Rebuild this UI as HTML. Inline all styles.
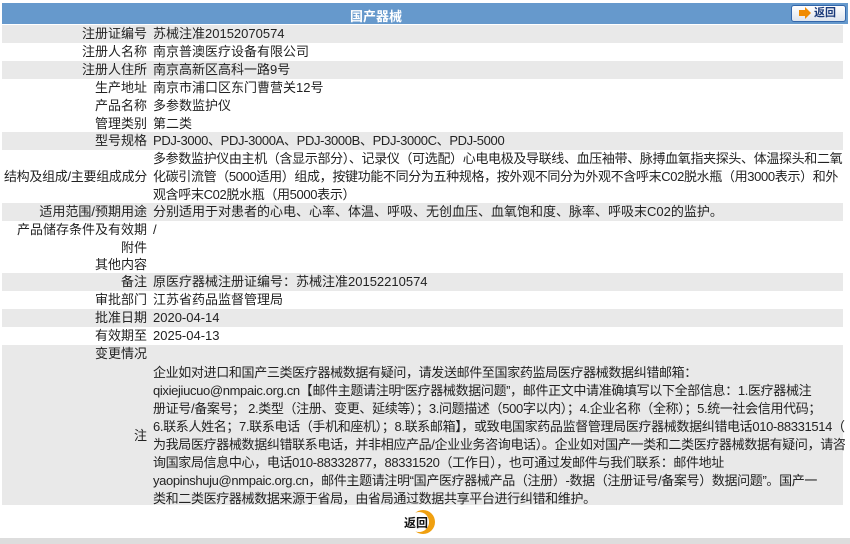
<!DOCTYPE html>
<html><head><meta charset="utf-8"><style>
*{margin:0;padding:0;box-sizing:border-box}
body{width:850px;height:544px;background:#fff;font-family:"Liberation Sans","Noto Sans CJK SC",sans-serif;font-size:13px;color:#222;position:relative;overflow:hidden}
.hd{position:absolute;left:2px;top:3px;width:846px;height:21px;background:#6699cc}
.hd .t{position:absolute;left:348px;top:3px;color:#fff;font-weight:bold;font-size:13px}
.btn{position:absolute;left:789px;top:2px;width:55px;height:17px;border:1px solid #3366aa;border-radius:3px;background:linear-gradient(#fff,#dde4ee);font-size:11px;font-weight:bold;color:#1a3a7a;line-height:15px;padding-left:22px}
.btn:before{content:"";position:absolute;left:7px;top:4px;width:6px;height:6px;background:#f08a00}
.btn:after{content:"";position:absolute;left:13px;top:1px;border-left:6px solid #f08a00;border-top:6px solid transparent;border-bottom:6px solid transparent}
.r{position:absolute;left:2px;width:841px;line-height:18px;white-space:nowrap}
.g{background:#e9e9e9}
.l{position:absolute;left:0;width:145px;text-align:right}
.v{position:absolute;left:151px;width:692px;overflow:hidden}
.tight{letter-spacing:-0.35px}
.foot{position:absolute;left:0;top:538px;width:850px;height:6px;background:#ddd}
</style></head><body>
<div class="hd"><span class="t">国产器械</span><div class="btn">返回</div></div>
<div class="r g" style="top:25px;height:18px"><span class="l">注册证编号</span><span class="v">苏械注准20152070574</span></div>
<div class="r" style="top:43px;height:18px"><span class="l">注册人名称</span><span class="v">南京普澳医疗设备有限公司</span></div>
<div class="r g" style="top:61px;height:18px"><span class="l">注册人住所</span><span class="v">南京高新区高科一路9号</span></div>
<div class="r" style="top:79px;height:18px"><span class="l">生产地址</span><span class="v">南京市浦口区东门曹营关12号</span></div>
<div class="r" style="top:97px;height:18px"><span class="l">产品名称</span><span class="v">多参数监护仪</span></div>
<div class="r" style="top:115px;height:18px"><span class="l">管理类别</span><span class="v">第二类</span></div>
<div class="r g" style="top:132px;height:18px"><span class="l">型号规格</span><span class="v tight">PDJ-3000、PDJ-3000A、PDJ-3000B、PDJ-3000C、PDJ-5000</span></div>
<div class="r" style="top:150px;height:53px"><span class="l" style="top:18px;left:1px;width:144px;letter-spacing:-0.3px">结构及组成/主要组成成分</span><span class="v tight">多参数监护仪由主机（含显示部分）、记录仪（可选配）心电电极及导联线、血压袖带、脉搏血氧指夹探头、体温探头和二氧<br>化碳引流管（5000适用）组成，按键功能不同分为五种规格，按外观不同分为外观不含呼末C02脱水瓶（用3000表示）和外<br>观含呼末C02脱水瓶（用5000表示）</span></div>
<div class="r g" style="top:203px;height:18px"><span class="l">适用范围/预期用途</span><span class="v">分别适用于对患者的心电、心率、体温、呼吸、无创血压、血氧饱和度、脉率、呼吸末C02的监护。</span></div>
<div class="r" style="top:221px;height:18px"><span class="l">产品储存条件及有效期</span><span class="v">/</span></div>
<div class="r" style="top:239px;height:17px"><span class="l">附件</span></div>
<div class="r" style="top:256px;height:17px"><span class="l">其他内容</span></div>
<div class="r g" style="top:273px;height:18px"><span class="l">备注</span><span class="v">原医疗器械注册证编号：苏械注准20152210574</span></div>
<div class="r" style="top:291px;height:18px"><span class="l">审批部门</span><span class="v">江苏省药品监督管理局</span></div>
<div class="r g" style="top:309px;height:18px"><span class="l">批准日期</span><span class="v">2020-04-14</span></div>
<div class="r" style="top:327px;height:18px"><span class="l">有效期至</span><span class="v">2025-04-13</span></div>
<div class="r g" style="top:345px;height:160px"><span class="l">变更情况</span>
<span class="l" style="top:82px">注</span>
<span class="v tight" style="top:19px">企业如对进口和国产三类医疗器械数据有疑问，请发送邮件至国家药监局医疗器械数据纠错邮箱：<br>qixiejiucuo@nmpaic.org.cn【邮件主题请注明“医疗器械数据问题”，邮件正文中请准确填写以下全部信息：1.医疗器械注<br>册证号/备案号； 2.类型（注册、变更、延续等）；3.问题描述（500字以内）；4.企业名称（全称）；5.统一社会信用代码；<br>6.联系人姓名；7.联系电话（手机和座机）；8.联系邮箱】，或致电国家药品监督管理局医疗器械数据纠错电话010-88331514（此电话<br>为我局医疗器械数据纠错联系电话，并非相应产品/企业业务咨询电话）。企业如对国产一类和二类医疗器械数据有疑问，请咨<br>询国家局信息中心，电话010-88332877，88331520（工作日），也可通过发邮件与我们联系：邮件地址<br>yaopinshuju@nmpaic.org.cn，邮件主题请注明“国产医疗器械产品（注册）-数据（注册证号/备案号）数据问题”。国产一<br>类和二类医疗器械数据来源于省局，由省局通过数据共享平台进行纠错和维护。</span></div>
<div style="position:absolute;left:411px;top:510px;width:24px;height:24px;border-radius:50%;background:#f0a010"></div>
<div style="position:absolute;left:409px;top:512px;width:20px;height:20px;border-radius:50%;background:#fff"></div>
<div style="position:absolute;left:404px;top:514px;font-size:12px;font-weight:bold;color:#111">返回</div>
<div class="foot"></div>
</body></html>
